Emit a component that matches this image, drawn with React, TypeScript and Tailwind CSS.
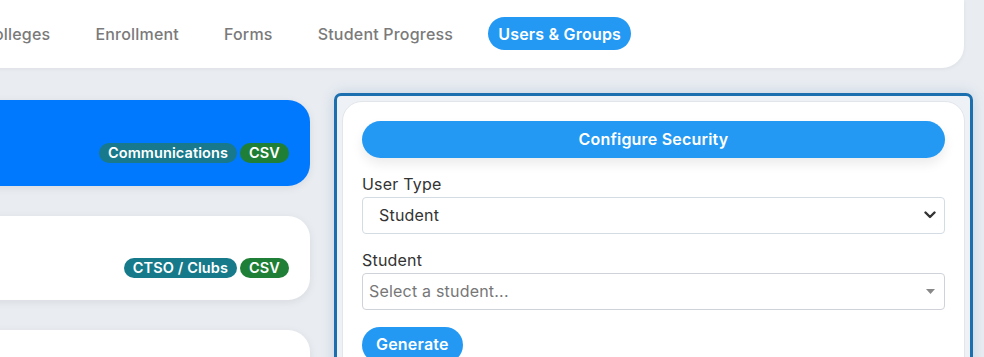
import React from "react";

const font = { fontFamily: "Inter, 'Noto Sans', 'Liberation Sans', sans-serif" };

function Badge({ children, color }: { children: React.ReactNode; color: string }) {
  return (
    <span
      className={`inline-flex h-[20px] items-center rounded-full px-[9px] text-[14.5px] font-semibold leading-none tracking-[0.1px] text-white ${color}`}
    >
      {children}
    </span>
  );
}

export default function App() {
  const navItems = ["Colleges", "Enrollment", "Forms", "Student Progress"];
  return (
    <div
      className="h-[357px] w-[984px] overflow-hidden bg-[#e9edf2]"
      style={font}
    >
      {/* top nav */}
      <div className="ml-[-40px] mr-[20px] flex h-[68px] items-center rounded-b-[22px] bg-white pb-[1px] pl-[12px] shadow-[0_1px_4px_rgba(0,0,0,0.06)]">
        <div className="flex items-center gap-[25px]">
          {navItems.map((n) => (
            <span
              key={n}
              className="px-[10px] text-[16px] font-medium tracking-[0.2px] text-[#7a7a7a]"
            >
              {n}
            </span>
          ))}
          <span className="flex h-[33px] items-center rounded-full bg-[#2399f3] px-[10px] text-[16px] font-semibold tracking-[0.2px] text-white">
            Users &amp; Groups
          </span>
        </div>
      </div>

      {/* body */}
      <div className="mt-[25px] flex items-start">
        {/* left column */}
        <div className="ml-[-30px] mt-[7px] flex w-[340px] flex-col gap-[30px]">
          <div className="flex h-[86px] items-end justify-end gap-[3px] rounded-[22px] bg-[#0079ff] pb-[23px] pr-[21px] shadow-[0_2px_8px_rgba(0,0,0,0.08)]">
            <Badge color="bg-[#17798b]">Communications</Badge>
            <Badge color="bg-[#1f7f36]">CSV</Badge>
          </div>
          <div className="flex h-[84px] items-end justify-end gap-[3px] rounded-[22px] bg-white pb-[22px] pr-[21px] shadow-[0_2px_8px_rgba(0,0,0,0.08)]">
            <Badge color="bg-[#167a8b]">CTSO / Clubs</Badge>
            <Badge color="bg-[#1f7f36]">CSV</Badge>
          </div>
          <div className="h-[84px] rounded-[22px] bg-white shadow-[0_2px_8px_rgba(0,0,0,0.08)]" />
        </div>

        {/* right panel */}
        <div className="ml-[24px] w-[639px] rounded-[7px] border-[3px] border-[#1b6fae] bg-[#eef1f5] p-[5px] shadow-[0_0_14px_rgba(40,80,140,0.18)]">
          <div className="h-[300px] rounded-[20px] border border-[#e2e6eb] bg-white px-[19px] pt-[19px]">
            <div className="flex h-[37px] items-center justify-center rounded-full bg-[#2399f3] pb-[2px] text-[16px] font-semibold tracking-[0.2px] text-white shadow-[0_6px_12px_rgba(0,0,0,0.08)]">
              Configure Security
            </div>

            <div className="mt-[15px] h-[22px] text-[16px] leading-[22px] tracking-[0.2px] text-[#333]">
              User Type
            </div>
            <div className="mt-[2px] flex h-[37px] items-center justify-between rounded-[4px] border border-[#d3dbe3] pb-[1px] pl-[16px] pr-[8px]">
              <span className="text-[16px] tracking-[0.2px] text-[#333]">Student</span>
              <svg width="12" height="8" viewBox="0 0 12 8">
                <path
                  d="M1.5 1.5 L6 6 L10.5 1.5"
                  fill="none"
                  stroke="#333"
                  strokeWidth="2.4"
                  strokeLinecap="round"
                  strokeLinejoin="round"
                />
              </svg>
            </div>

            <div className="mt-[15px] h-[22px] text-[16px] leading-[22px] tracking-[0.2px] text-[#333]">
              Student
            </div>
            <div className="mt-[2px] flex h-[37px] items-center justify-between rounded-[4px] border border-[#cfd3d9] pb-[1px] pl-[6px] pr-[9px]">
              <span className="text-[16px] tracking-[0.2px] text-[#777]">Select a student...</span>
              <svg width="9" height="5" viewBox="0 0 9 5">
                <path d="M0 0 L9 0 L4.5 5 Z" fill="#888" />
              </svg>
            </div>

            <div className="mt-[17px] flex">
              <span className="flex h-[36px] items-center rounded-full bg-[#2399f3] px-[14px] pb-[2px] text-[16px] font-semibold tracking-[0.2px] text-white">
                Generate
              </span>
            </div>
          </div>
        </div>
      </div>
    </div>
  );
}
